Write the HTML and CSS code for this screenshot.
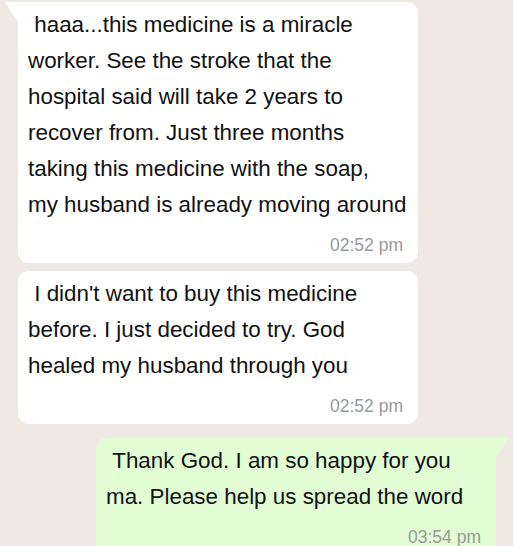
FILE: index.html
```html
<!DOCTYPE html>
<html lang="en">
<head>
    <meta charset="UTF-8">
    <meta name="viewport" content="width=device-width, initial-scale=1.0">
    <title>Chat</title>
    <link rel="stylesheet" href="styles.css">
</head>
<body>
    <div class="chat">
        <!-- eingehende Nachrichten -->
        <div class="bubble in tail">
            <div class="text">&nbsp;haaa...this medicine is a miracle<br>worker. See the stroke that the<br>hospital said will take 2 years to<br>recover from. Just three months<br>taking this medicine with the soap,<br>my husband is already moving around</div>
            <div class="time">02:52 pm</div>
        </div>

        <div class="bubble in">
            <div class="text">&nbsp;I didn't want to buy this medicine<br>before. I just decided to try. God<br>healed my husband through you</div>
            <div class="time">02:52 pm</div>
        </div>

        <!-- ausgehende Nachricht -->
        <div class="bubble out tail">
            <div class="text">&nbsp;Thank God. I am so happy for you<br>ma. Please help us spread the word</div>
            <div class="time">03:54 pm</div>
        </div>
    </div>
</body>
</html>
```

FILE: styles.css
```css
body {
    margin: 0;
    background-color: #efe9e4;
    font-family: Arial, "Liberation Sans", sans-serif;
    overflow: hidden;
}

.chat {
    display: flex;
    flex-direction: column;
    padding: 2px 17px 0 18px;
}

.bubble {
    position: relative;
    width: 400px;
    box-sizing: border-box;
    padding: 5px 10px 8px 10px;
    border-radius: 11px;
    margin-bottom: 8px;
}

.bubble .text {
    font-size: 22.4px;
    line-height: 36px;
    color: #111;
    white-space: nowrap;
}

.bubble .time {
    margin-top: 12px;
    text-align: right;
    font-size: 17.5px;
    line-height: 20px;
    color: #999;
    padding-right: 5px;
}

.in {
    background: white;
    align-self: flex-start;
}

.out {
    background: #e2fdd4;
    align-self: flex-end;
    margin-top: 6px;
}

.in.tail {
    border-top-left-radius: 0;
}

.out.tail {
    border-top-right-radius: 0;
}

/* Sprechblasen-Spitze */
.in.tail::before {
    content: "";
    position: absolute;
    top: 0;
    left: -13px;
    border-top: 20px solid white;
    border-left: 13px solid transparent;
}

.out.tail::before {
    content: "";
    position: absolute;
    top: 0;
    right: -13px;
    border-top: 20px solid #e2fdd4;
    border-right: 13px solid transparent;
}
```
